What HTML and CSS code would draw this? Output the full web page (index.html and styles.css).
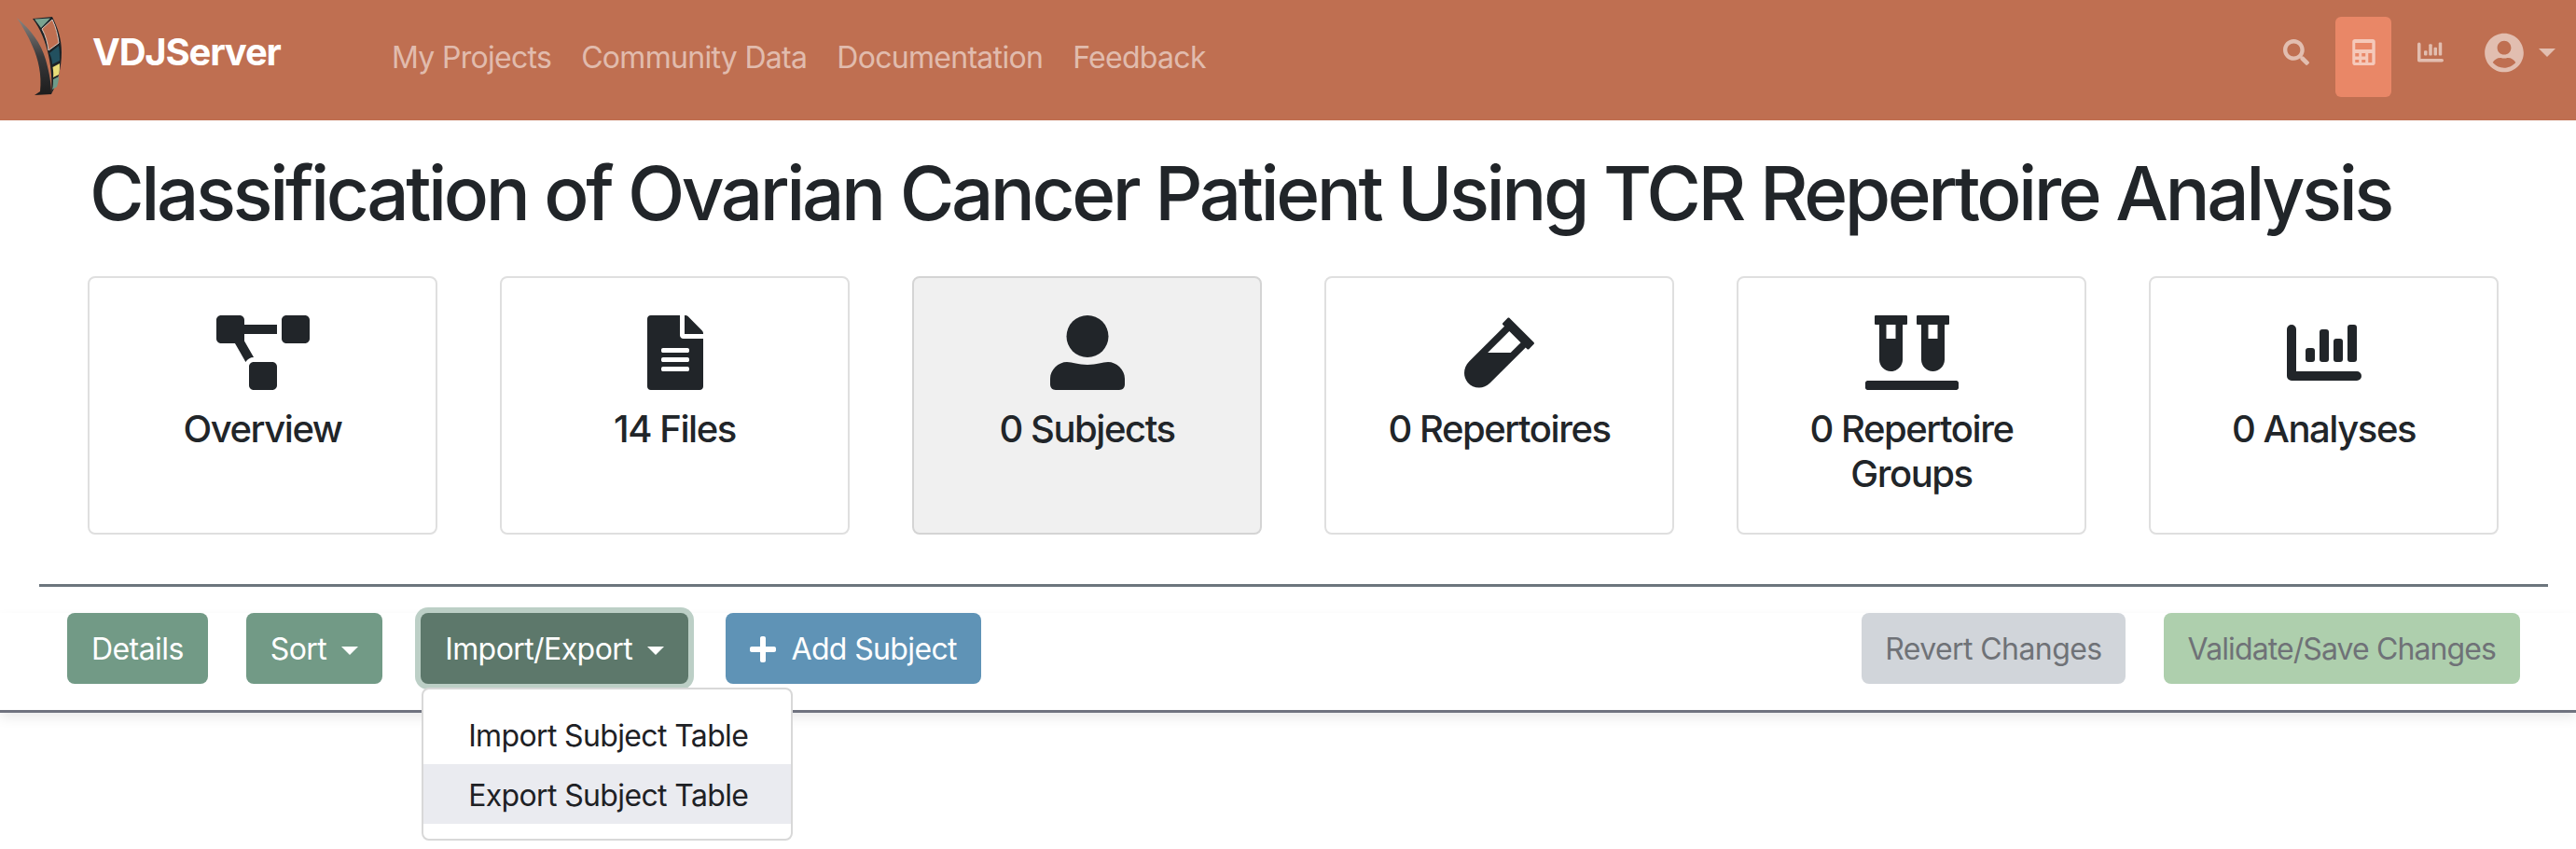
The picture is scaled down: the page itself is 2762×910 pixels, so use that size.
FILE: index.html
```html
<!DOCTYPE html>
<html lang="en">
<head>
    <meta charset="UTF-8">
    <title>VDJServer</title>
    <link rel="stylesheet" href="styles.css">
</head>
<body>
    <!-- Top navigation -->
    <nav class="navbar">
        <a class="brand">
            <svg class="brand-logo" viewBox="0 0 50 86" width="50" height="86">
                <defs>
                    <linearGradient id="blade" x1="0" y1="0" x2="0" y2="1">
                        <stop offset="0" stop-color="#8c8783"/>
                        <stop offset="0.5" stop-color="#3a3a3c"/>
                        <stop offset="1" stop-color="#1c1c1c"/>
                    </linearGradient>
                </defs>
                <path d="M0 1C15 14 26 28 31 46C35 60 37 72 37 83L19 84L25 80C27 62 23 45 17 32C12 20 6 10 0 1Z" fill="url(#blade)"/>
                <path d="M17 2L38 0C44 12 48 24 48 38C48 54 44 70 37 83C39 58 34 24 17 2Z" fill="#1c2226"/>
                <path d="M19 2.500L36 1.500L26 12Z" fill="#7aa390"/>
                <path d="M27 13L38 3C42 11 44 20 45 28L34 36C33 28 31 20 27 13Z" fill="#bf6f51" stroke="#d8c8c0" stroke-width="1"/>
                <path d="M35 39L45 31C46 37 46 42 46 47L38 51C38 47 37 43 35 39Z" fill="#22505f"/>
                <path d="M38.500 54L46 50C46 55 46 59 45 62L39 65C39.500 61 39 57 38.500 54Z" fill="#e8dc78"/>
                <path d="M39 67L45 64C45 68 44 72 43 75L38 78C39 74 39 70 39 67Z" fill="#6f9a88"/>
            </svg>
            <span class="brand-name">VDJServer</span>
        </a>
        <div class="nav-links">
            <a class="nav-link">My Projects</a>
            <a class="nav-link">Community Data</a>
            <a class="nav-link">Documentation</a>
            <a class="nav-link">Feedback</a>
        </div>
        <div class="nav-tools">
            <a class="tool">
                <svg class="tool-icon" viewBox="0 0 512 512" width="28" height="28"><path d="M505 442.700L405.300 343c-4.500-4.500-10.600-7-17-7H372c27.600-35.300 44-79.700 44-128C416 93.100 322.900 0 208 0S0 93.100 0 208s93.100 208 208 208c48.300 0 92.700-16.400 128-44v16.300c0 6.400 2.500 12.500 7 17l99.700 99.700c9.400 9.400 24.600 9.400 33.900 0l28.300-28.300c9.400-9.400 9.400-24.600.1-34zM208 336c-70.700 0-128-57.200-128-128 0-70.700 57.200-128 128-128 70.700 0 128 57.200 128 128 0 70.700-57.200 128-128 128z"/></svg>
            </a>
            <a class="tool tool-active">
                <svg class="tool-icon" viewBox="0 0 448 512" width="25" height="28"><path fill-rule="evenodd" d="M48 0H400C426 0 448 22 448 48V464C448 490 426 512 400 512H48C22 512 0 490 0 464V48C0 22 22 0 48 0ZM55 73V200H385V73ZM55 274V338H128V274ZM183 274V338H256V274ZM311 274V457H385V274ZM55 402V457H128V402ZM183 402V457H256V402Z"/></svg>
            </a>
            <a class="tool">
                <svg class="tool-icon" viewBox="0 0 80 80" width="28" height="28">
                    <path d="M5 10a5 5 0 0 1 5 5V60H75a5 5 0 0 1 0 10H5a5 5 0 0 1-5-5V15a5 5 0 0 1 5-5Z"/>
                    <rect x="20" y="35" width="10" height="15" rx="3"/>
                    <rect x="35" y="15" width="10" height="35" rx="3"/>
                    <rect x="50" y="25" width="10" height="25" rx="3"/>
                    <rect x="65" y="10" width="10" height="40" rx="3"/>
                </svg>
            </a>
            <a class="user-menu">
                <svg class="tool-icon" viewBox="0 0 496 512" width="42" height="43"><path d="M248 8C111 8 0 119 0 256s111 248 248 248 248-111 248-248S385 8 248 8zm0 96c48.600 0 88 39.400 88 88s-39.400 88-88 88-88-39.400-88-88 39.400-88 88-88zm0 344c-58.700 0-111.300-26.600-146.500-68.200 18.800-35.400 55.600-59.800 98.500-59.800 2.400 0 4.800.4 7.100 1.100 13 4.200 26.600 6.900 40.900 6.900 14.300 0 28-2.700 40.900-6.900 2.300-.7 4.700-1.100 7.100-1.100 42.900 0 79.700 24.400 98.500 59.800C359.300 421.400 306.700 448 248 448z"/></svg>
                <span class="user-caret"></span>
            </a>
        </div>
    </nav>

    <h1 class="project-title">Classification of Ovarian Cancer Patient Using TCR Repertoire Analysis</h1>

    <!-- Project sections -->
    <div class="section-cards">
        <div class="section-card">
            <svg class="card-icon" viewBox="0 0 640 512" width="100" height="80"><path d="M384 320H256c-17.670 0-32 14.330-32 32v128c0 17.670 14.330 32 32 32h128c17.670 0 32-14.330 32-32V352c0-17.670-14.330-32-32-32zM192 32c0-17.670-14.330-32-32-32H32C14.330 0 0 14.330 0 32v128c0 17.670 14.330 32 32 32h95.720l73.160 128.040C211.980 300.980 232.400 288 256 288h.28L192 175.510V128h224V64H192V32zM608 0H480c-17.670 0-32 14.330-32 32v128c0 17.670 14.330 32 32 32h128c17.670 0 32-14.330 32-32V32c0-17.670-14.330-32-32-32z"/></svg>
            <div class="card-label">Overview</div>
        </div>
        <div class="section-card">
            <svg class="card-icon" viewBox="0 0 384 512" width="60" height="80"><path d="M224 136V0H24C10.700 0 0 10.700 0 24v464c0 13.300 10.700 24 24 24h336c13.300 0 24-10.700 24-24V160H248c-13.200 0-24-10.800-24-24zm64 236c0 6.600-5.400 12-12 12H108c-6.600 0-12-5.400-12-12v-8c0-6.600 5.400-12 12-12h168c6.600 0 12 5.400 12 12v8zm0-64c0 6.600-5.400 12-12 12H108c-6.600 0-12-5.400-12-12v-8c0-6.600 5.400-12 12-12h168c6.600 0 12 5.400 12 12v8zm0-72v8c0 6.600-5.400 12-12 12H108c-6.600 0-12-5.400-12-12v-8c0-6.600 5.400-12 12-12h168c6.600 0 12 5.400 12 12zm96-114.100v6.100H256V0h6.100c6.400 0 12.500 2.500 17 7l97.900 98c4.500 4.500 7 10.600 7 16.900z"/></svg>
            <div class="card-label">14 Files</div>
        </div>
        <div class="section-card active">
            <svg class="card-icon" viewBox="0 0 80 80" width="80" height="80">
                <circle cx="40" cy="22.500" r="22.500"/>
                <path d="M6 80H74C78 80 80 77 80 74V68C80 58 71 50 62 50C56 50 50 53 40 53C30 53 24 50 18 50C9 50 0 58 0 68V74C0 77 2 80 6 80Z"/>
            </svg>
            <div class="card-label">0 Subjects</div>
        </div>
        <div class="section-card">
            <svg class="card-icon" viewBox="0 0 480 512" width="75" height="80"><path d="M477.700 186.100L309.500 18.300c-3.100-3.100-8.200-3.100-11.300 0l-34 33.900c-3.100 3.100-3.100 8.200 0 11.300l11.200 11.100L33 316.500c-38.800 38.700-45.100 102-9.400 143.500 20.600 24 49.500 36 78.400 35.900 26.400 0 52.800-10 72.900-30.100l246.300-245.700 11.200 11.100c3.100 3.100 8.200 3.100 11.300 0l33.900-33.900c3.100-3 3.100-8.100-.1-11.200zM318 256H161l148-147.700 78.500 78.300L318 256z"/></svg>
            <div class="card-label">0 Repertoires</div>
        </div>
        <div class="section-card">
            <svg class="card-icon" viewBox="0 0 640 512" width="100" height="80"><path d="M72 64h24v240c0 44.100 35.900 80 80 80s80-35.900 80-80V64h24c4.400 0 8-3.600 8-8V8c0-4.400-3.600-8-8-8H72c-4.400 0-8 3.600-8 8v48c0 4.400 3.600 8 8 8zm72 0h64v96h-64V64zm480 384H16c-8.800 0-16 7.200-16 16v32c0 8.800 7.200 16 16 16h608c8.800 0 16-7.200 16-16v-32c0-8.800-7.200-16-16-16zM360 64h24v240c0 44.100 35.900 80 80 80s80-35.900 80-80V64h24c4.400 0 8-3.600 8-8V8c0-4.400-3.600-8-8-8H360c-4.400 0-8 3.600-8 8v48c0 4.400 3.600 8 8 8zm72 0h64v96h-64V64z"/></svg>
            <div class="card-label">0 Repertoire Groups</div>
        </div>
        <div class="section-card">
            <svg class="card-icon" viewBox="0 0 80 80" width="80" height="80">
                <path d="M5 10a5 5 0 0 1 5 5V60H75a5 5 0 0 1 0 10H5a5 5 0 0 1-5-5V15a5 5 0 0 1 5-5Z"/>
                <rect x="20" y="35" width="10" height="15" rx="3"/>
                <rect x="35" y="15" width="10" height="35" rx="3"/>
                <rect x="50" y="25" width="10" height="25" rx="3"/>
                <rect x="65" y="10" width="10" height="40" rx="3"/>
            </svg>
            <div class="card-label">0 Analyses</div>
        </div>
    </div>

    <hr class="divider">

    <!-- Subject toolbar -->
    <div class="toolbar">
        <div class="toolbar-group">
            <button class="btn btn-green">Details</button>
            <button class="btn btn-green">Sort<span class="caret"></span></button>
            <div class="dropdown">
                <button class="btn btn-green-open">Import/Export<span class="caret"></span></button>
                <div class="dropdown-menu">
                    <a class="dropdown-item">Import Subject Table</a>
                    <a class="dropdown-item hovered">Export Subject Table</a>
                </div>
            </div>
            <button class="btn btn-blue">
                <svg class="btn-icon" viewBox="0 0 448 512" width="28" height="32"><path d="M416 208H272V64c0-17.670-14.330-32-32-32h-32c-17.670 0-32 14.330-32 32v144H32c-17.670 0-32 14.330-32 32v32c0 17.670 14.330 32 32 32h144v144c0 17.670 14.330 32 32 32h32c17.670 0 32-14.330 32-32V304h144c17.670 0 32-14.330 32-32v-32c0-17.670-14.330-32-32-32z"/></svg>
                Add Subject
            </button>
        </div>
        <div class="toolbar-group">
            <button class="btn btn-disabled-grey">Revert Changes</button>
            <button class="btn btn-disabled-green">Validate/Save Changes</button>
        </div>
    </div>
</body>
</html>
```

FILE: styles.css
```css
:root {
    --nav-bg: #bf6f51;
    --nav-active: #e98767;
    --nav-text: rgba(255, 255, 255, 0.55);
    --text: #212529;
    --green: #729a86;
    --green-dark: #5d786b;
    --blue: #5f93b6;
}

* {
    box-sizing: border-box;
}

body {
    min-height: 100vh;
    margin: 0;
    background: #fff;
    color: var(--text);
    font-family: 'Inter', 'Liberation Sans', sans-serif;
    font-size: 32px;
    line-height: 1.5;
    letter-spacing: -0.02em;
}

/* Navbar */
.navbar {
    display: flex;
    align-items: flex-start;
    height: 129px;
    padding-left: 18px;
    padding-right: 22px;
    background: var(--nav-bg);
}

.brand {
    display: flex;
    align-items: flex-start;
    width: 402px;
    padding-top: 18px;
    color: #fff;
}

.brand-logo {
    display: block;
    flex: none;
}

.brand-name {
    margin-left: 31px;
    margin-top: 8px;
    font-size: 40px;
    font-weight: 700;
    line-height: 60px;
    letter-spacing: -0.03em;
}

.nav-links {
    display: flex;
    gap: 32px;
    padding-top: 38px;
    letter-spacing: -0.022em;
}

.nav-link {
    color: var(--nav-text);
}

.nav-tools {
    display: flex;
    align-items: flex-start;
    gap: 12px;
    margin-left: auto;
    padding-top: 18px;
}

.tool {
    display: flex;
    justify-content: center;
    width: 60px;
    height: 86px;
    padding-top: 24px;
    border-radius: 6px;
}

.tool-active {
    background: var(--nav-active);
}

.tool-icon {
    display: block;
    fill: var(--nav-text);
}

.user-menu {
    display: flex;
    gap: 16px;
    margin-left: 16px;
    padding-top: 17px;
}

.user-caret {
    width: 0;
    height: 0;
    margin-top: 17px;
    border-top: 9.600px solid var(--nav-text);
    border-left: 9.600px solid transparent;
    border-right: 9.600px solid transparent;
}

/* Title and cards */
.project-title {
    margin: 30px 0 41px 96px;
    font-size: 80px;
    font-weight: 500;
    line-height: 96px;
    letter-spacing: -0.043em;
    white-space: nowrap;
}

.section-cards {
    display: flex;
    gap: 67px;
    margin: 0 83px 0 94px;
}

.section-card {
    flex: 1;
    height: 277px;
    padding: 40px 24px 0;
    border: 2px solid #dfdfdf;
    border-radius: 8px;
    text-align: center;
}

.section-card.active {
    background: #f0f0f0;
    border-color: #d4d4d4;
}

.card-icon {
    display: block;
    margin: 0 auto 18px;
    fill: var(--text);
}

.card-label {
    font-size: 40px;
    font-weight: 500;
    line-height: 48px;
    letter-spacing: -0.036em;
}

.divider {
    height: 3px;
    margin: 53px 30px 28px 42px;
    border: 0;
    background: #6c757d;
}

/* Toolbar */
.toolbar {
    display: flex;
    justify-content: space-between;
    padding: 0 60px 28px 72px;
    border-bottom: 3px solid #70737f;
    box-shadow: 0 6px 12px rgba(0, 0, 0, 0.08);
}

.toolbar-group {
    display: flex;
    gap: 41px;
}

.btn {
    display: block;
    height: 76px;
    padding: 13px 26px 11px;
    border: 0;
    border-radius: 8px;
    color: #fff;
    font-family: inherit;
    font-size: 32px;
    line-height: 52px;
    letter-spacing: -0.018em;
    white-space: nowrap;
}

.btn-green {
    background: var(--green);
}

.btn-green-open {
    background: var(--green-dark);
    box-shadow: 0 0 0 6px #bccfc6;
}

.btn-blue {
    margin-left: -1px;
    background: var(--blue);
    letter-spacing: -0.02em;
}

.btn-icon {
    margin-right: 8px;
    vertical-align: -5px;
    fill: #fff;
}

.btn-disabled-grey {
    padding-left: 25px;
    padding-right: 25px;
    background: #d1d5da;
    color: #6f7277;
}

.btn-disabled-green {
    background: #aecfad;
    color: #6f7277;
    letter-spacing: -0.028em;
}

.caret {
    display: inline-block;
    margin-left: 16px;
    vertical-align: 5px;
    border-top: 9.600px solid currentColor;
    border-left: 9.600px solid transparent;
    border-right: 9.600px solid transparent;
}

/* Dropdown */
.dropdown {
    position: relative;
}

.dropdown-menu {
    position: absolute;
    top: 80px;
    left: 1px;
    z-index: 10;
    width: 398px;
    padding: 16px 0;
    background: #fff;
    border: 2px solid #d8d8d8;
    border-radius: 8px;
}

.dropdown-item {
    display: block;
    height: 64px;
    padding: 10px 48px 6px;
    color: #1e2125;
    line-height: 48px;
    white-space: nowrap;
}

.dropdown-item.hovered {
    background: #eaebf0;
}
```
